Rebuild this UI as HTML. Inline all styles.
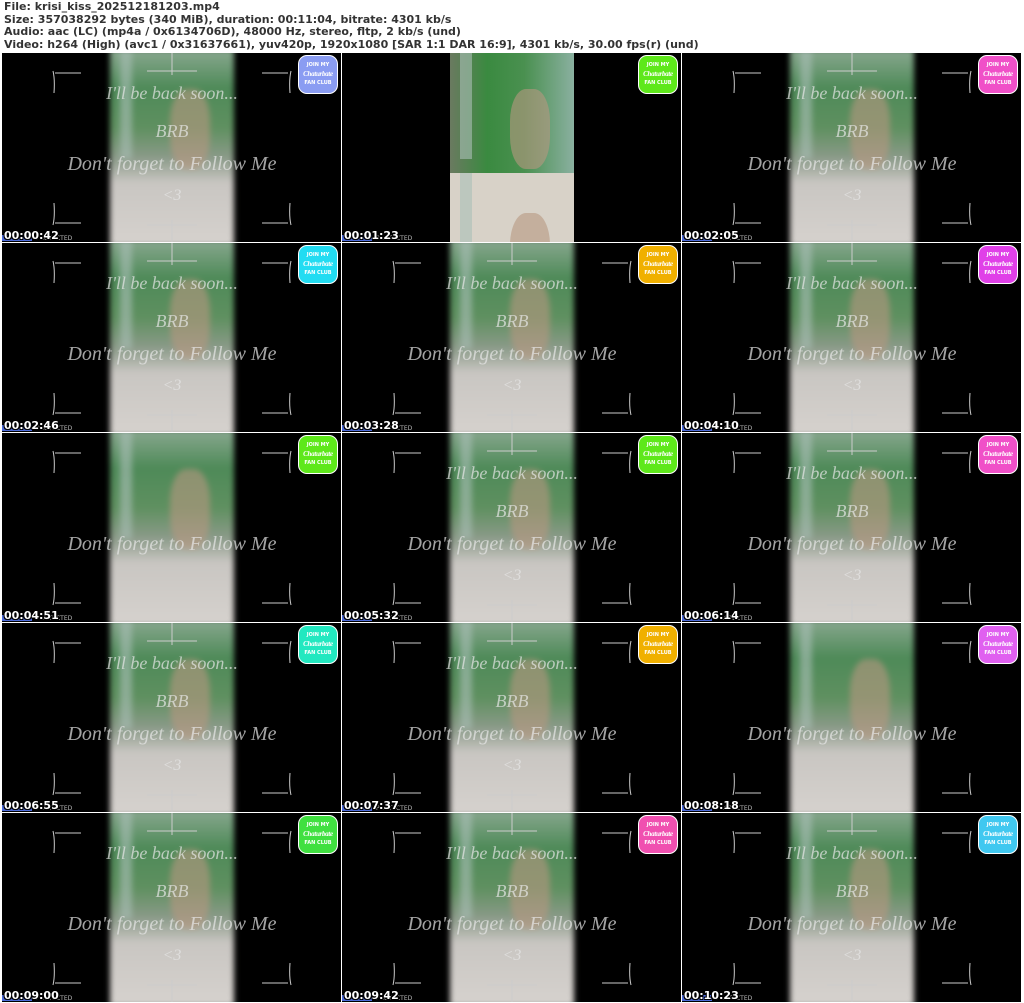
<!DOCTYPE html><html><head><meta charset="utf-8"><style>
body{margin:0;width:1024px;height:1003px;background:#fff;position:relative;overflow:hidden;font-family:"DejaVu Sans",sans-serif}
.hd{position:absolute;left:4px;top:1px;font-size:11px;line-height:12.7px;font-weight:bold;color:#333;white-space:pre}
.c{position:absolute;width:339px;height:189px;background:#000;overflow:hidden}
.s{position:absolute;left:108px;top:-4px;width:124px;height:197px;background:linear-gradient(#8aa890 0,#4e8a58 20%,#5f9060 40%,#8a9a88 55%,#c9c6c2 68%,#d6d2ce 100%);filter:blur(3px)}
.s:before{content:"";position:absolute;left:10px;top:0;width:12px;height:110px;background:#aac0b8;opacity:.6}
.s:after{content:"";position:absolute;left:60px;top:40px;width:40px;height:80px;background:#b89880;border-radius:40%;opacity:.6}
.t{position:absolute;left:60px;width:220px;text-align:center;font-family:"Liberation Serif",serif;font-style:italic;color:#e8e8e8;opacity:.7}
.b{position:absolute;left:296px;top:2px;width:40px;height:39px;border-radius:9px;border:1.5px solid #fff;box-sizing:border-box;color:#fff;font-size:5px;text-align:center;font-weight:bold;line-height:7px;padding-top:6px;overflow:hidden}
.b i{display:block;font-family:"Liberation Serif",serif;font-size:7px;font-style:italic;line-height:11px;letter-spacing:-.3px}
.ts{position:absolute;left:2px;top:176px;font-size:11px;font-weight:bold;color:#fff;text-shadow:1px 1px 0 #000,-1px -1px 0 #000,1px -1px 0 #000,-1px 1px 0 #000;z-index:2}
.bar{position:absolute;left:0;top:182px;width:30px;height:6px;background:#4b6ad8;z-index:1}
.pr{position:absolute;left:34px;top:182px;font-size:6px;color:#bbb}
svg{position:absolute;left:0;top:0}
</style></head><body>
<div class="hd">File: krisi_kiss_202512181203.mp4
Size: 357038292 bytes (340 MiB), duration: 00:11:04, bitrate: 4301 kb/s
Audio: aac (LC) (mp4a / 0x6134706D), 48000 Hz, stereo, fltp, 2 kb/s (und)
Video: h264 (High) (avc1 / 0x31637661), yuv420p, 1920x1080 [SAR 1:1 DAR 16:9], 4301 kb/s, 30.00 fps(r) (und)</div>

<div class="c" style="left:2px;top:53px"><div class="s"></div><svg width="339" height="189" fill="none" stroke="#ccc" stroke-width="1"><path d="M53 20h26M51 18q2 8 1 22M286 20h-26M289 18q-2 8-1 22M53 170h26M51 172q2-8 1-22M286 170h-26M289 172q-2-8-1-22M145 18h50M170 0v22M145 172h50M170 189v-22"/></svg><div class="t" style="top:30px;font-size:18px">I'll be back soon...</div><div class="t" style="top:68px;font-size:18px">BRB</div><div class="t" style="top:100px;font-size:20px">Don't forget to Follow Me</div><div class="t" style="top:134px;font-size:16px">&lt;3</div><div class="b" style="background:#8a9cf2">JOIN MY<i>Chaturbate</i>FAN CLUB</div><div class="bar"></div><div class="pr">PROTECTED</div><div class="ts">00:00:42</div></div>

<div class="c" style="left:342px;top:53px"><div class="s" style="background:linear-gradient(90deg,#6a7a60,#3a8a40 30%,#4a9050 60%,#8ab0a0);filter:none"></div><div class="s" style="top:120px;height:70px;background:#d8d2c8;filter:none"></div><div class="b" style="background:#5ee81a">JOIN MY<i>Chaturbate</i>FAN CLUB</div><div class="bar"></div><div class="pr">PROTECTED</div><div class="ts">00:01:23</div></div>

<div class="c" style="left:682px;top:53px"><div class="s"></div><svg width="339" height="189" fill="none" stroke="#ccc"><path d="M53 20h26M51 18q2 8 1 22M286 20h-26M289 18q-2 8-1 22M53 170h26M51 172q2-8 1-22M286 170h-26M289 172q-2-8-1-22M145 18h50M170 0v22M145 172h50M170 189v-22"/></svg><div class="t" style="top:30px;font-size:18px">I'll be back soon...</div><div class="t" style="top:68px;font-size:18px">BRB</div><div class="t" style="top:100px;font-size:20px">Don't forget to Follow Me</div><div class="t" style="top:134px;font-size:16px">&lt;3</div><div class="b" style="background:#f050c8">JOIN MY<i>Chaturbate</i>FAN CLUB</div><div class="bar"></div><div class="pr">PROTECTED</div><div class="ts">00:02:05</div></div>

<div class="c" style="left:2px;top:243px"><div class="s"></div><svg width="339" height="189" fill="none" stroke="#ccc"><path d="M53 20h26M51 18q2 8 1 22M286 20h-26M289 18q-2 8-1 22M53 170h26M51 172q2-8 1-22M286 170h-26M289 172q-2-8-1-22M145 18h50M170 0v22M145 172h50M170 189v-22"/></svg><div class="t" style="top:30px;font-size:18px">I'll be back soon...</div><div class="t" style="top:68px;font-size:18px">BRB</div><div class="t" style="top:100px;font-size:20px">Don't forget to Follow Me</div><div class="t" style="top:134px;font-size:16px">&lt;3</div><div class="b" style="background:#22dcf2">JOIN MY<i>Chaturbate</i>FAN CLUB</div><div class="bar"></div><div class="pr">PROTECTED</div><div class="ts">00:02:46</div></div>

<div class="c" style="left:342px;top:243px"><div class="s"></div><svg width="339" height="189" fill="none" stroke="#ccc"><path d="M53 20h26M51 18q2 8 1 22M286 20h-26M289 18q-2 8-1 22M53 170h26M51 172q2-8 1-22M286 170h-26M289 172q-2-8-1-22M145 18h50M170 0v22M145 172h50M170 189v-22"/></svg><div class="t" style="top:30px;font-size:18px">I'll be back soon...</div><div class="t" style="top:68px;font-size:18px">BRB</div><div class="t" style="top:100px;font-size:20px">Don't forget to Follow Me</div><div class="t" style="top:134px;font-size:16px">&lt;3</div><div class="b" style="background:#f0b000">JOIN MY<i>Chaturbate</i>FAN CLUB</div><div class="bar"></div><div class="pr">PROTECTED</div><div class="ts">00:03:28</div></div>

<div class="c" style="left:682px;top:243px"><div class="s"></div><svg width="339" height="189" fill="none" stroke="#ccc"><path d="M53 20h26M51 18q2 8 1 22M286 20h-26M289 18q-2 8-1 22M53 170h26M51 172q2-8 1-22M286 170h-26M289 172q-2-8-1-22M145 18h50M170 0v22M145 172h50M170 189v-22"/></svg><div class="t" style="top:30px;font-size:18px">I'll be back soon...</div><div class="t" style="top:68px;font-size:18px">BRB</div><div class="t" style="top:100px;font-size:20px">Don't forget to Follow Me</div><div class="t" style="top:134px;font-size:16px">&lt;3</div><div class="b" style="background:#e040e8">JOIN MY<i>Chaturbate</i>FAN CLUB</div><div class="bar"></div><div class="pr">PROTECTED</div><div class="ts">00:04:10</div></div>

<div class="c" style="left:2px;top:433px"><div class="s"></div><svg width="339" height="189" fill="none" stroke="#ccc"><path d="M53 20h26M51 18q2 8 1 22M286 20h-26M289 18q-2 8-1 22M53 170h26M51 172q2-8 1-22M286 170h-26M289 172q-2-8-1-22"/></svg><div class="t" style="top:100px;font-size:20px">Don't forget to Follow Me</div><div class="b" style="background:#5ee81a">JOIN MY<i>Chaturbate</i>FAN CLUB</div><div class="bar"></div><div class="pr">PROTECTED</div><div class="ts">00:04:51</div></div>

<div class="c" style="left:342px;top:433px"><div class="s"></div><svg width="339" height="189" fill="none" stroke="#ccc"><path d="M53 20h26M51 18q2 8 1 22M286 20h-26M289 18q-2 8-1 22M53 170h26M51 172q2-8 1-22M286 170h-26M289 172q-2-8-1-22M145 18h50M170 0v22M145 172h50M170 189v-22"/></svg><div class="t" style="top:30px;font-size:18px">I'll be back soon...</div><div class="t" style="top:68px;font-size:18px">BRB</div><div class="t" style="top:100px;font-size:20px">Don't forget to Follow Me</div><div class="t" style="top:134px;font-size:16px">&lt;3</div><div class="b" style="background:#5ee81a">JOIN MY<i>Chaturbate</i>FAN CLUB</div><div class="bar"></div><div class="pr">PROTECTED</div><div class="ts">00:05:32</div></div>

<div class="c" style="left:682px;top:433px"><div class="s"></div><svg width="339" height="189" fill="none" stroke="#ccc"><path d="M53 20h26M51 18q2 8 1 22M286 20h-26M289 18q-2 8-1 22M53 170h26M51 172q2-8 1-22M286 170h-26M289 172q-2-8-1-22M145 18h50M170 0v22M145 172h50M170 189v-22"/></svg><div class="t" style="top:30px;font-size:18px">I'll be back soon...</div><div class="t" style="top:68px;font-size:18px">BRB</div><div class="t" style="top:100px;font-size:20px">Don't forget to Follow Me</div><div class="t" style="top:134px;font-size:16px">&lt;3</div><div class="b" style="background:#f050c8">JOIN MY<i>Chaturbate</i>FAN CLUB</div><div class="bar"></div><div class="pr">PROTECTED</div><div class="ts">00:06:14</div></div>

<div class="c" style="left:2px;top:623px"><div class="s"></div><svg width="339" height="189" fill="none" stroke="#ccc"><path d="M53 20h26M51 18q2 8 1 22M286 20h-26M289 18q-2 8-1 22M53 170h26M51 172q2-8 1-22M286 170h-26M289 172q-2-8-1-22M145 18h50M170 0v22M145 172h50M170 189v-22"/></svg><div class="t" style="top:30px;font-size:18px">I'll be back soon...</div><div class="t" style="top:68px;font-size:18px">BRB</div><div class="t" style="top:100px;font-size:20px">Don't forget to Follow Me</div><div class="t" style="top:134px;font-size:16px">&lt;3</div><div class="b" style="background:#22e8c0">JOIN MY<i>Chaturbate</i>FAN CLUB</div><div class="bar"></div><div class="pr">PROTECTED</div><div class="ts">00:06:55</div></div>

<div class="c" style="left:342px;top:623px"><div class="s"></div><svg width="339" height="189" fill="none" stroke="#ccc"><path d="M53 20h26M51 18q2 8 1 22M286 20h-26M289 18q-2 8-1 22M53 170h26M51 172q2-8 1-22M286 170h-26M289 172q-2-8-1-22M145 18h50M170 0v22M145 172h50M170 189v-22"/></svg><div class="t" style="top:30px;font-size:18px">I'll be back soon...</div><div class="t" style="top:68px;font-size:18px">BRB</div><div class="t" style="top:100px;font-size:20px">Don't forget to Follow Me</div><div class="t" style="top:134px;font-size:16px">&lt;3</div><div class="b" style="background:#f0b000">JOIN MY<i>Chaturbate</i>FAN CLUB</div><div class="bar"></div><div class="pr">PROTECTED</div><div class="ts">00:07:37</div></div>

<div class="c" style="left:682px;top:623px"><div class="s"></div><svg width="339" height="189" fill="none" stroke="#ccc"><path d="M53 20h26M51 18q2 8 1 22M286 20h-26M289 18q-2 8-1 22M53 170h26M51 172q2-8 1-22M286 170h-26M289 172q-2-8-1-22"/></svg><div class="t" style="top:100px;font-size:20px">Don't forget to Follow Me</div><div class="b" style="background:#e060f0">JOIN MY<i>Chaturbate</i>FAN CLUB</div><div class="bar"></div><div class="pr">PROTECTED</div><div class="ts">00:08:18</div></div>

<div class="c" style="left:2px;top:813px"><div class="s"></div><svg width="339" height="189" fill="none" stroke="#ccc"><path d="M53 20h26M51 18q2 8 1 22M286 20h-26M289 18q-2 8-1 22M53 170h26M51 172q2-8 1-22M286 170h-26M289 172q-2-8-1-22M145 18h50M170 0v22M145 172h50M170 189v-22"/></svg><div class="t" style="top:30px;font-size:18px">I'll be back soon...</div><div class="t" style="top:68px;font-size:18px">BRB</div><div class="t" style="top:100px;font-size:20px">Don't forget to Follow Me</div><div class="t" style="top:134px;font-size:16px">&lt;3</div><div class="b" style="background:#40e040">JOIN MY<i>Chaturbate</i>FAN CLUB</div><div class="bar"></div><div class="pr">PROTECTED</div><div class="ts">00:09:00</div></div>

<div class="c" style="left:342px;top:813px"><div class="s"></div><svg width="339" height="189" fill="none" stroke="#ccc"><path d="M53 20h26M51 18q2 8 1 22M286 20h-26M289 18q-2 8-1 22M53 170h26M51 172q2-8 1-22M286 170h-26M289 172q-2-8-1-22M145 18h50M170 0v22M145 172h50M170 189v-22"/></svg><div class="t" style="top:30px;font-size:18px">I'll be back soon...</div><div class="t" style="top:68px;font-size:18px">BRB</div><div class="t" style="top:100px;font-size:20px">Don't forget to Follow Me</div><div class="t" style="top:134px;font-size:16px">&lt;3</div><div class="b" style="background:#f050b0">JOIN MY<i>Chaturbate</i>FAN CLUB</div><div class="bar"></div><div class="pr">PROTECTED</div><div class="ts">00:09:42</div></div>

<div class="c" style="left:682px;top:813px"><div class="s"></div><svg width="339" height="189" fill="none" stroke="#ccc"><path d="M53 20h26M51 18q2 8 1 22M286 20h-26M289 18q-2 8-1 22M53 170h26M51 172q2-8 1-22M286 170h-26M289 172q-2-8-1-22M145 18h50M170 0v22M145 172h50M170 189v-22"/></svg><div class="t" style="top:30px;font-size:18px">I'll be back soon...</div><div class="t" style="top:68px;font-size:18px">BRB</div><div class="t" style="top:100px;font-size:20px">Don't forget to Follow Me</div><div class="t" style="top:134px;font-size:16px">&lt;3</div><div class="b" style="background:#40c8f0">JOIN MY<i>Chaturbate</i>FAN CLUB</div><div class="bar"></div><div class="pr">PROTECTED</div><div class="ts">00:10:23</div></div>
</body></html>
